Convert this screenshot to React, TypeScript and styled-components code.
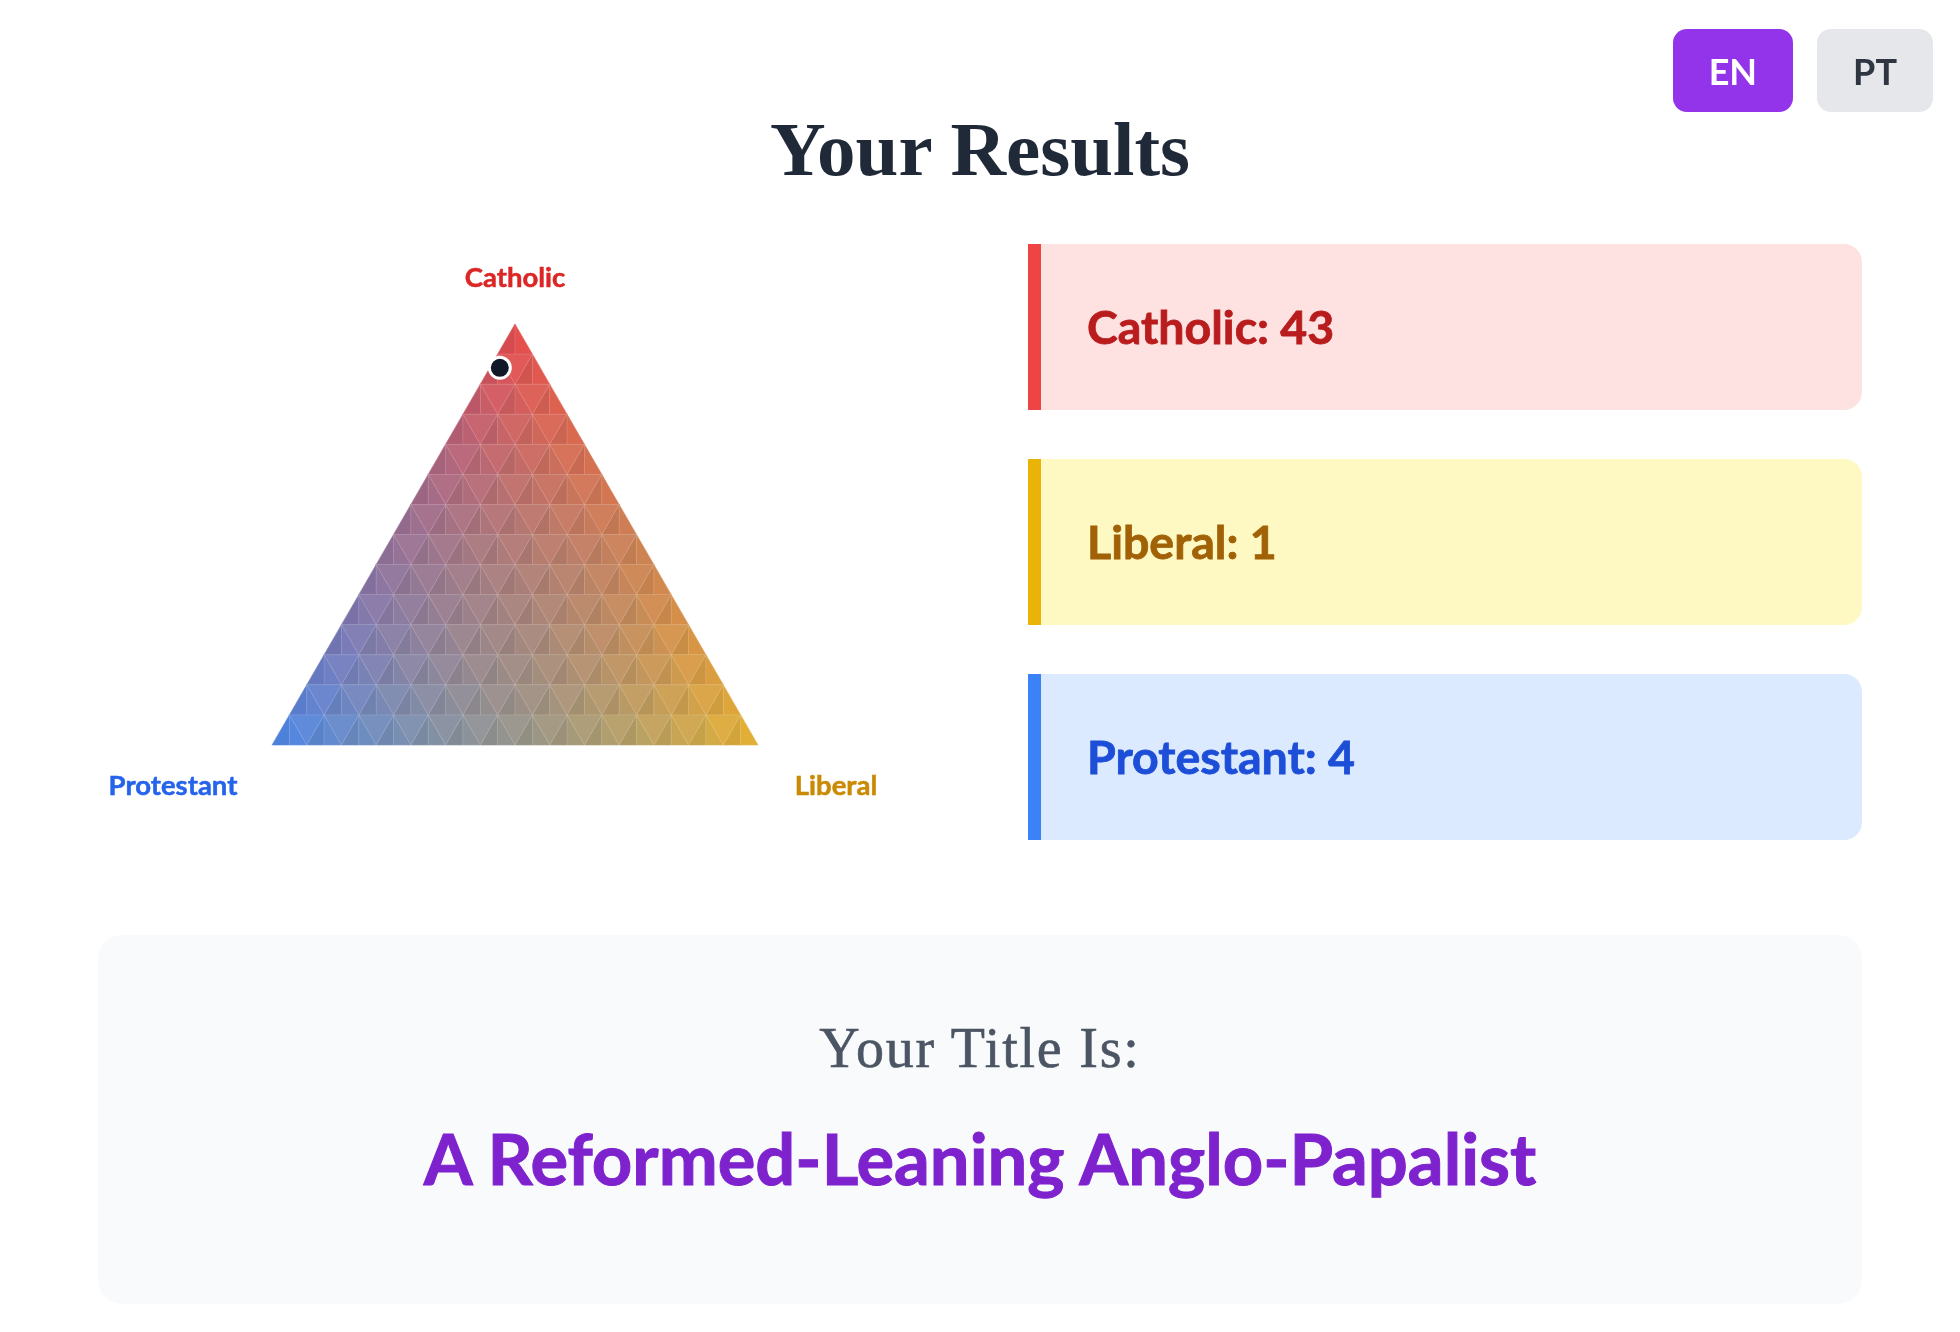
import { FC } from 'react';
import styled, { createGlobalStyle } from 'styled-components';

const GlobalStyle = createGlobalStyle`
  html, body {
    margin: 0;
    padding: 0;
    background: #ffffff;
  }
  body {
    font-family: Lato, "Noto Sans", sans-serif;
  }
`;

type RGB = [number, number, number];

const RED: RGB = [236, 66, 68];
const BLUE: RGB = [66, 132, 240];
const YELLOW: RGB = [232, 178, 40];
const GREY: RGB = [140, 128, 130];

// chart geometry, in svg units (same as px)
const CHART_W = 834;
const CHART_H = 596;
const APEX_X = 417;
const APEX_Y = 80;
const SIDE = 486;
const TRI_H = 421;
const STEPS = 14;

const scores = { catholic: 43, liberal: 1, protestant: 4 };

const mix = (c: number, l: number, p: number, shade = 0): string => {
  // the further from a corner, the more muted the colour gets
  const spread = 1 - Math.max(c, l, p);
  const mute = Math.min(spread * 0.55, 0.35);
  const ch = (i: number) => {
    let v = RED[i] * c + YELLOW[i] * l + BLUE[i] * p;
    v = v * (1 - mute) + GREY[i] * mute;
    v = shade >= 0 ? v + (255 - v) * shade : v * (1 + shade);
    return Math.round(v);
  };
  return `rgb(${ch(0)},${ch(1)},${ch(2)})`;
};

// barycentric weights for a point inside the triangle
const weightsAt = (x: number, y: number) => {
  const t = Math.min(Math.max((y - APEX_Y) / TRI_H, 0), 1);
  const c = 1 - t;
  const w = t * SIDE;
  const xl = APEX_X - w / 2;
  const f = w > 0 ? Math.min(Math.max((x - xl) / w, 0), 1) : 0.5;
  const l = (1 - c) * f;
  return { c, l, p: 1 - c - l };
};

const colorAt = (x: number, y: number, shade = 0) => {
  const { c, l, p } = weightsAt(x, y);
  return mix(c, l, p, shade);
};

const pts = (list: number[][]) => list.map((q) => `${q[0].toFixed(2)},${q[1].toFixed(2)}`).join(' ');

const buildMesh = () => {
  const s = SIDE / STEPS;
  const h = TRI_H / STEPS;
  const cells: { points: string; fill: string }[] = [];
  for (let r = 0; r < STEPS; r++) {
    const y0 = APEX_Y + r * h;
    const y1 = y0 + h;
    const startX = APEX_X - (r * s) / 2;
    for (let k = 0; k <= r; k++) {
      const tx = startX + k * s;
      // up triangle, split in two halves: left half a little darker
      cells.push({
        points: pts([[tx, y0], [tx - s / 2, y1], [tx, y1]]),
        fill: colorAt(tx - s / 6, y0 + (2 * h) / 3, -0.07),
      });
      cells.push({
        points: pts([[tx, y0], [tx, y1], [tx + s / 2, y1]]),
        fill: colorAt(tx + s / 6, y0 + (2 * h) / 3, -0.02),
      });
    }
    for (let k = 0; k < r; k++) {
      const lx = startX + k * s;
      cells.push({
        points: pts([[lx, y0], [lx + s, y0], [lx + s / 2, y1]]),
        fill: colorAt(lx + s / 2, y0 + h / 3, 0.02),
      });
    }
  }
  return cells;
};

const mesh = buildMesh();

const Page = styled.main`
  position: relative;
  max-width: 1764px;
  margin: 0 auto;
  padding: 103px 0 29px;
`;

const LangSwitch = styled.div`
  position: fixed;
  top: 29px;
  right: 27px;
  display: flex;
  gap: 24px;
`;

const LangButton = styled.button<{ $active?: boolean }>`
  height: 83px;
  padding: 0 36px;
  border: none;
  border-radius: 14px;
  font-family: Lato, "Noto Sans", sans-serif;
  font-size: 36px;
  font-weight: 700;
  background: ${(p) => (p.$active ? '#9333ea' : '#e5e7eb')};
  color: ${(p) => (p.$active ? '#ffffff' : '#2f3541')};
  cursor: pointer;
`;

const Heading = styled.h1`
  margin: 0;
  text-align: center;
  font-family: "Liberation Serif", "Times New Roman", serif;
  font-size: 77px;
  font-weight: 700;
  line-height: 1.2;
  color: #1f2937;
`;

const ResultsGrid = styled.section`
  display: grid;
  grid-template-columns: 834px 834px;
  column-gap: 96px;
  align-items: center;
  margin-top: 49px;
`;

const ChartSvg = styled.svg`
  display: block;
  width: ${CHART_W}px;
  height: ${CHART_H}px;
`;

const ChartLabel = styled.text<{ $color: string }>`
  font-family: Lato, "Noto Sans", sans-serif;
  font-size: 27.5px;
  font-weight: 700;
  fill: ${(p) => p.$color};
  stroke: ${(p) => p.$color};
  stroke-width: 0.5px;
`;

const ScoreList = styled.div`
  display: flex;
  flex-direction: column;
  gap: 49px;
`;

const ScoreCard = styled.div<{ $bg: string; $border: string; $text: string }>`
  display: flex;
  align-items: center;
  height: 166px;
  box-sizing: border-box;
  padding-left: 46px;
  border-left: 13px solid ${(p) => p.$border};
  border-radius: 0 18px 18px 0;
  background: ${(p) => p.$bg};
  color: ${(p) => p.$text};
  font-family: Lato, "Noto Sans", sans-serif;
  font-size: 46.5px;
  font-weight: 700;
  line-height: 1.2;
  -webkit-text-stroke: 0.8px ${(p) => p.$text};
`;

const TitleBox = styled.section`
  margin-top: 95px;
  padding: 80px 0 104px;
  border-radius: 24px;
  background: #f9fafb;
  text-align: center;
`;

const TitleLead = styled.h2`
  margin: 0;
  font-family: "Liberation Serif", "Times New Roman", serif;
  font-size: 56px;
  font-weight: 400;
  letter-spacing: 1.8px;
  line-height: 1.2;
  color: #4b5563;
  -webkit-text-stroke: 0.6px #4b5563;
`;

const TitleName = styled.p`
  margin: 33px 0 0;
  font-family: Lato, "Noto Sans", sans-serif;
  font-size: 70.5px;
  font-weight: 700;
  line-height: 1.2;
  color: #7e22ce;
  -webkit-text-stroke: 1px #7e22ce;
`;

const TriangleChart: FC = () => {
  const total = scores.catholic + scores.liberal + scores.protestant;
  const c = scores.catholic / total;
  const l = scores.liberal / total;
  const p = scores.protestant / total;
  const left = [APEX_X - SIDE / 2, APEX_Y + TRI_H];
  const right = [APEX_X + SIDE / 2, APEX_Y + TRI_H];
  const dotX = c * APEX_X + l * right[0] + p * left[0];
  const dotY = c * APEX_Y + l * right[1] + p * left[1];

  return (
    <ChartSvg viewBox={`0 0 ${CHART_W} ${CHART_H}`}>
      <ChartLabel $color="#dc2626" x={APEX_X} y={43} textAnchor="middle">
        Catholic
      </ChartLabel>
      <g opacity={0.95}>
        {mesh.map((cell, i) => (
          <polygon key={i} points={cell.points} fill={cell.fill} stroke={cell.fill} strokeWidth={0.6} />
        ))}
        {mesh.map((cell, i) => (
          <polygon key={`o${i}`} points={cell.points} fill="none" stroke="rgba(255,255,255,0.09)" strokeWidth={0.8} />
        ))}
      </g>
      <circle cx={dotX} cy={dotY} r={10.5} fill="#111827" stroke="#ffffff" strokeWidth={3} />
      <ChartLabel $color="#2563eb" x={75} y={551} textAnchor="middle">
        Protestant
      </ChartLabel>
      <ChartLabel $color="#ca8a04" x={738} y={551} textAnchor="middle">
        Liberal
      </ChartLabel>
    </ChartSvg>
  );
};

const App: FC = () => {
  return (
    <>
      <GlobalStyle />
      <LangSwitch>
        <LangButton $active>EN</LangButton>
        <LangButton>PT</LangButton>
      </LangSwitch>
      <Page>
        <Heading>Your Results</Heading>
        <ResultsGrid>
          <TriangleChart />
          <ScoreList>
            <ScoreCard $bg="#fee2e2" $border="#ef4444" $text="#b91c1c">
              Catholic: {scores.catholic}
            </ScoreCard>
            <ScoreCard $bg="#fef9c3" $border="#eab308" $text="#a16207">
              Liberal: {scores.liberal}
            </ScoreCard>
            <ScoreCard $bg="#dbeafe" $border="#3b82f6" $text="#1d4ed8">
              Protestant: {scores.protestant}
            </ScoreCard>
          </ScoreList>
        </ResultsGrid>
        <TitleBox>
          <TitleLead>Your Title Is:</TitleLead>
          <TitleName>A Reformed-Leaning Anglo-Papalist</TitleName>
        </TitleBox>
      </Page>
    </>
  );
};

export default App;
